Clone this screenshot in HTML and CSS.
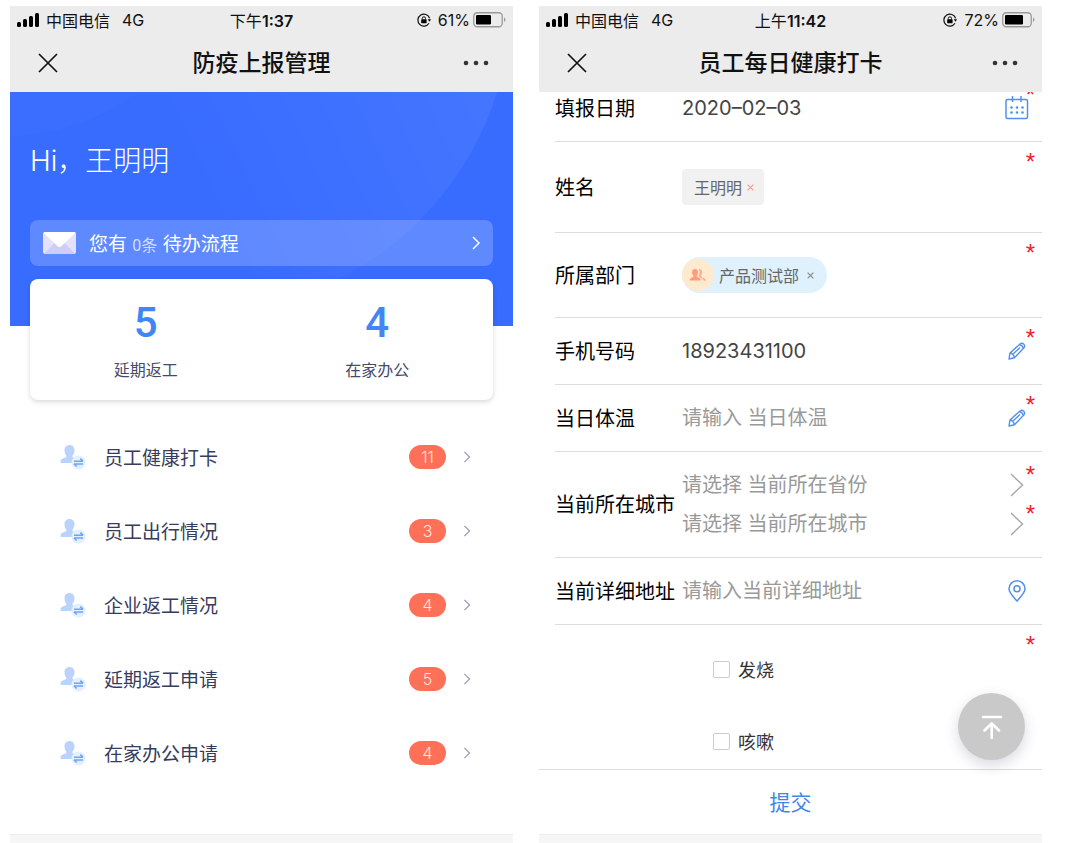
FILE: index.html
```html
<!DOCTYPE html>
<html lang="zh-CN">
<head>
<meta charset="utf-8">
<meta name="viewport" content="width=device-width, initial-scale=1">
<title>防疫上报管理</title>
<link rel="stylesheet" href="styles.css">
</head>
<body>
<svg class="defs" aria-hidden="true">
  <symbol id="signal" viewBox="0 0 23 14"><rect x="0" y="9" width="4" height="5" rx="1.5"/><rect x="6" y="6" width="4" height="8" rx="1.5"/><rect x="12" y="3" width="4" height="11" rx="1.5"/><rect x="18" y="0" width="4" height="14" rx="1.5"/></symbol>
  <symbol id="lock" viewBox="0 0 14 14"><path d="M12.6 5.2A6 6 0 1 0 12 10.3" fill="none" stroke="currentColor" stroke-width="1.2"/><path d="M10.7 6.2h3.3l-1.5 2.5z"/><rect x="4.2" y="6.3" width="5.4" height="4" rx=".7"/><path d="M5.3 6.6V5.4a1.6 1.6 0 0 1 3.2 0v1.2" fill="none" stroke="currentColor"/></symbol>
  <symbol id="close" viewBox="0 0 20 20"><path d="M1 1l18 18M19 1L1 19" fill="none" stroke="currentColor" stroke-width="1.7"/></symbol>
  <symbol id="more" viewBox="0 0 26 6"><circle cx="3" cy="3" r="2.3"/><circle cx="13" cy="3" r="2.3"/><circle cx="23" cy="3" r="2.3"/></symbol>
  <symbol id="chevron" viewBox="0 0 8 14"><path d="M1 1l6 6-6 6" fill="none" stroke="currentColor" stroke-width="1.5"/></symbol>
  <symbol id="wide-chevron" viewBox="0 0 14 24"><path d="M1 1l11.500 11L1 23" fill="none" stroke="currentColor" stroke-width="1.5"/></symbol>
  <symbol id="cross" viewBox="0 0 8 8"><path d="M.7 .7l6.600 6.600M7.300 .7L.7 7.300" fill="none" stroke="currentColor" stroke-width="1.3"/></symbol>
  <symbol id="pencil" viewBox="0 0 18 18"><path d="M1 17l1-6L12.300 1.700q1.700-1.200 3.300 .3t.6 3.500L6.500 15.800zM2 11q3.500 .6 4.500 4.800M11.500 2.500q3 .8 4 3.800M5.300 11.800l6.700-6.300" fill="none" stroke="currentColor" stroke-width="1.4" stroke-linejoin="round"/></symbol>
  <symbol id="person" viewBox="0 0 26 26"><path d="M9.500 1c3 0 5 2.200 5 5.200 0 2.100-.8 4.300-1.900 5.300-.6 1.300.2 2 1.500 2.500 2.400.9 3.400 1.500 3.400 5H.6c-.2-3.500.8-4.100 3.700-5 1.800-.6 2.500-1.200 1.800-2.500C5 10.400 4.500 8.200 4.500 6.200 4.500 3.200 6.500 1 9.500 1z" fill="#bbd3fb"/><circle cx="18.500" cy="18.500" r="7" fill="#e3effe"/><path d="M14 17.200h9M20.300 14.700l2.700 2.500M23 20h-9M16.700 22.500L14 20" stroke="#6fa5f4" stroke-width="1.600" fill="none"/></symbol>
</svg>

<main class="screens">
  <section class="phone">
    <header class="topbar">
      <div class="status">
        <div class="carrier"><svg class="signal"><use href="#signal"/></svg><span>中国电信</span><span class="network">4G</span></div>
        <div class="clock">下午<b>1:37</b></div>
        <div class="power"><svg class="lock"><use href="#lock"/></svg><span>61%</span>
          <svg class="battery" viewBox="0 0 33 16"><rect x=".75" y=".75" width="28.500" height="14" rx="3.500" fill="none" stroke="#999" stroke-width="1.300"/><rect x="3" y="3" width="15" height="9.500" rx="1.200"/><path d="M31 5.500q1.500 .8 1.500 2.300T31 10z" fill="#999"/></svg></div>
      </div>
      <nav class="navbar">
        <button class="nav-button" aria-label="关闭"><svg class="close"><use href="#close"/></svg></button>
        <h1>防疫上报管理</h1>
        <button class="nav-button nav-more" aria-label="更多"><svg class="more"><use href="#more"/></svg></button>
      </nav>
    </header>

    <div class="hero">
      <svg class="hero-glow" aria-hidden="true">
        <defs><linearGradient id="glow" gradientUnits="userSpaceOnUse" x1="200" y1="120" x2="460" y2="0"><stop offset="0" stop-color="#fff" stop-opacity="0"/><stop offset="1" stop-color="#fff" stop-opacity=".06"/></linearGradient></defs>
        <circle cx="190" cy="-92" r="311" fill="url(#glow)"/>
        <circle cx="-10" cy="-192" r="237" fill="#fff" opacity=".02"/>
      </svg>
      <p class="greeting">Hi，王明明</p>
      <a class="notice" href="#todo">
        <svg class="mail" viewBox="0 0 33 22"><rect width="33" height="22" rx="2" fill="#e4e2fb"/><path d="M1 21.500L13 9.500h7l12 12q-.5 .5-1.500 .5h-28q-1 0-1.500-.5z" fill="#cfcdf6"/><path d="M.5 1Q1 0 2 0h29q1 0 1.500 1L18.500 14q-2 1.800-4 0z" fill="#fff"/></svg>
        <span class="notice-text">您有 <span class="todo-count">0条</span> 待办流程</span>
        <svg class="chevron"><use href="#chevron"/></svg>
      </a>
    </div>
    <div class="summary">
      <div class="stat"><strong>5</strong><span>延期返工</span></div>
      <div class="stat"><strong>4</strong><span>在家办公</span></div>
    </div>
    <ul class="menu">
      <li><a href="#checkin"><svg class="person"><use href="#person"/></svg><span class="menu-name">员工健康打卡</span><span class="count">11</span><svg class="chevron"><use href="#chevron"/></svg></a></li>
      <li><a href="#travel"><svg class="person"><use href="#person"/></svg><span class="menu-name">员工出行情况</span><span class="count">3</span><svg class="chevron"><use href="#chevron"/></svg></a></li>
      <li><a href="#return"><svg class="person"><use href="#person"/></svg><span class="menu-name">企业返工情况</span><span class="count">4</span><svg class="chevron"><use href="#chevron"/></svg></a></li>
      <li><a href="#delay"><svg class="person"><use href="#person"/></svg><span class="menu-name">延期返工申请</span><span class="count">5</span><svg class="chevron"><use href="#chevron"/></svg></a></li>
      <li><a href="#home-office"><svg class="person"><use href="#person"/></svg><span class="menu-name">在家办公申请</span><span class="count">4</span><svg class="chevron"><use href="#chevron"/></svg></a></li>
    </ul>
    <div class="home-strip"></div>
  </section>

  <section class="phone">
    <header class="topbar">
      <div class="status">
        <div class="carrier"><svg class="signal"><use href="#signal"/></svg><span>中国电信</span><span class="network">4G</span></div>
        <div class="clock">上午<b>11:42</b></div>
        <div class="power"><svg class="lock"><use href="#lock"/></svg><span>72%</span>
          <svg class="battery" viewBox="0 0 33 16"><rect x=".75" y=".75" width="28.500" height="14" rx="3.500" fill="none" stroke="#999" stroke-width="1.300"/><rect x="3" y="3" width="18" height="9.500" rx="1.200"/><path d="M31 5.500q1.500 .8 1.500 2.300T31 10z" fill="#999"/></svg></div>
      </div>
      <nav class="navbar">
        <button class="nav-button" aria-label="关闭"><svg class="close"><use href="#close"/></svg></button>
        <h1>员工每日健康打卡</h1>
        <button class="nav-button nav-more" aria-label="更多"><svg class="more"><use href="#more"/></svg></button>
      </nav>
    </header>

    <form class="report">
      <div class="fields-area">
        <div class="fields">
          <div class="field">
            <label for="date">填报日期</label>
            <div class="control"><input id="date" type="text" value="2020–02–03"><svg class="calendar" viewBox="0 0 24 24"><rect x="1" y="3.500" width="21.500" height="19" rx="1.500"/><path d="M7.500 0v6M16 0v6"/><g class="dots"><circle cx="6.500" cy="11.500" r="1.300"/><circle cx="12" cy="11.500" r="1.300"/><circle cx="17.500" cy="11.500" r="1.300"/><circle cx="6.500" cy="16.500" r="1.300"/><circle cx="12" cy="16.500" r="1.300"/><circle cx="17.500" cy="16.500" r="1.300"/></g></svg></div>
            <span class="required">*</span>
          </div>
          <div class="field field-name">
            <span class="label">姓名</span>
            <div class="control"><span class="tag">王明明<button type="button" class="remove remove-name" aria-label="移除王明明"><svg><use href="#cross"/></svg></button></span></div>
            <span class="required">*</span>
          </div>
          <div class="field field-dept">
            <span class="label">所属部门</span>
            <div class="control"><span class="tag tag-dept"><span class="avatar"><svg viewBox="0 0 18 14"><path d="M6 1c2 0 3 1.500 3 3.300 0 1.500-.5 2.600-1.200 3.300-.3 1 .2 1.400 1.400 1.800 1.600.5 2.300 1.100 2.300 3.100H.8c0-2 .6-2.600 2.200-3.100 1.200-.4 1.700-.8 1.300-1.800C3.500 6.900 3 5.800 3 4.300 3 2.500 4 1 6 1z"/><path d="M9.500 1c2.300-.5 3.600 1 3.600 3 0 1.500-.4 2.600-1.100 3.300-.3 1 .3 1.500 1 2.200l.8 2.500-3.300-2.700c-.6-.6-1-1-.7-1.800 1.200-2 1.200-4.700-.3-6.500z" opacity=".75"/><path d="M13.500 9l3.800 3.500h-2.500z"/></svg></span>产品测试部<button type="button" class="remove" aria-label="移除产品测试部"><svg><use href="#cross"/></svg></button></span></div>
            <span class="required">*</span>
          </div>
          <div class="field">
            <label for="phone">手机号码</label>
            <div class="control"><input id="phone" type="text" value="18923431100"><svg class="pencil"><use href="#pencil"/></svg></div>
            <span class="required">*</span>
          </div>
          <div class="field">
            <label for="temp">当日体温</label>
            <div class="control"><input id="temp" type="text" placeholder="请输入 当日体温"><svg class="pencil"><use href="#pencil"/></svg></div>
            <span class="required">*</span>
          </div>
          <div class="field field-city">
            <label for="province">当前所在城市</label>
            <div class="choices">
              <div class="control"><select id="province"><option>请选择 当前所在省份</option></select><svg class="wide-chevron"><use href="#wide-chevron"/></svg><span class="required">*</span></div>
              <div class="control"><select id="city" aria-label="当前所在城市"><option>请选择 当前所在城市</option></select><svg class="wide-chevron"><use href="#wide-chevron"/></svg><span class="required">*</span></div>
            </div>
          </div>
          <div class="field">
            <label for="address">当前详细地址</label>
            <div class="control"><input id="address" type="text" placeholder="请输入当前详细地址"><svg class="pin" viewBox="0 0 18 22"><path d="M9 21C6 17.500 1 13 1 8.800A8 8 0 0 1 17 8.800C17 13 12 17.500 9 21z"/><circle cx="9" cy="8.800" r="3"/></svg></div>
          </div>
          <div class="field field-symptoms">
            <label class="symptom"><input type="checkbox">发烧</label>
            <label class="symptom"><input type="checkbox">咳嗽</label>
            <span class="required">*</span>
          </div>
        </div>
        <button type="button" class="to-top" aria-label="回到顶部"><svg viewBox="0 0 22 24"><path d="M2 2h18M10.700 23V8.500M3.500 15.500l7.200-7 7.300 7" fill="none" stroke="#fff" stroke-width="2.600" stroke-linecap="round" stroke-linejoin="round"/></svg></button>
      </div>
      <button type="submit" class="submit">提交</button>
    </form>
    <div class="home-strip"></div>
  </section>
</main>
</body>
</html>
```
FILE: styles.css
```css
* { box-sizing: border-box; }

body {
  margin: 0;
  background: #fff;
  color: #111;
  font-family: Inter, "Noto Sans CJK SC", sans-serif;
  font-size: 16px;
}

h1, p, ul { margin: 0; padding: 0; }
ul { list-style: none; }
a { color: inherit; text-decoration: none; }
svg { display: block; flex: none; }
button, input, select { font: inherit; }
button { padding: 0; border: 0; background: none; color: inherit; cursor: pointer; }

.defs { position: absolute; width: 0; height: 0; }

.screens {
  display: grid;
  grid-template-columns: 1fr 1fr;
  gap: 26px;
  height: 100vh;
  padding: 6px 26px 0 10px;
}

.phone {
  display: flex;
  flex-direction: column;
  min-width: 0;
  min-height: 0;
}

/* status bar and navigation */
.topbar { flex: none; background: #ececec; }

.status {
  display: grid;
  grid-template-columns: 1fr auto 1fr;
  align-items: center;
  height: 28px;
  padding: 0 7px;
}
.carrier, .power { display: flex; align-items: center; }
.carrier { gap: 6px; }
.network { margin-left: 6px; }
.clock b { font-weight: 600; }
.power { justify-content: flex-end; gap: 3px; }
.signal { width: 23px; height: 14px; }
.lock { width: 14px; height: 14px; margin-right: 4px; }
.battery { width: 33px; height: 16px; }

.navbar {
  display: grid;
  grid-template-columns: 1fr auto 1fr;
  align-items: center;
  height: 58px;
  padding: 0 24px;
}
.navbar h1 { font-size: 23px; font-weight: 500; line-height: 32px; }
.nav-button { justify-self: start; margin-left: 4px; }
.nav-more { justify-self: end; color: #333; fill: #333; }
.close { width: 20px; height: 20px; }
.more { width: 26px; height: 6px; }

/* dashboard */
.hero {
  position: relative;
  flex: none;
  height: 234px;
  padding: 48px 20px 0;
  background: #386cff;
  color: #fff;
}
.hero-glow { position: absolute; top: 0; left: 0; width: 100%; height: 100%; }
.greeting { position: relative; font-size: 28px; font-weight: 300; line-height: 42px; }

.notice {
  position: relative;
  display: flex;
  align-items: center;
  height: 46px;
  margin-top: 38px;
  padding: 0 13px;
  border-radius: 8px;
  background: rgba(255, 255, 255, .2);
  font-size: 19px;
}
.notice-text { flex: 1; margin-left: 13px; padding-bottom: 2px; }
.todo-count { font-family: Roboto, "Noto Sans CJK SC", sans-serif; font-size: 16px; opacity: .7; }
.mail { width: 33px; height: 22px; }
.chevron { width: 8px; height: 14px; }

.summary {
  position: relative;
  display: grid;
  grid-template-columns: 1fr 1fr;
  flex: none;
  margin: -47px 20px 0;
  padding: 20px 0 18px;
  border-radius: 8px;
  background: #fff;
  box-shadow: 0 2px 5px rgba(0, 0, 0, .15);
}
.stat { display: flex; flex-direction: column; align-items: center; gap: 12px; }
.stat strong {
  color: #4285f4;
  font-family: Roboto, sans-serif;
  font-size: 42px;
  font-weight: 500;
  line-height: 48px;
}
.stat span { color: #464a6b; line-height: 23px; }

.menu { margin-top: 20px; padding: 0 42px 0 50px; }
.menu a { display: flex; align-items: center; height: 74px; }
.menu-name { flex: 1; margin-left: 18px; padding-bottom: 2px; color: #373c5c; font-size: 19px; }
.person { width: 26px; height: 26px; }
.count {
  width: 37px;
  margin-right: 17px;
  border-radius: 12px;
  background: #ff7058;
  color: #ffe5df;
  font-weight: 300;
  line-height: 24px;
  text-align: center;
}
.menu .chevron { height: 12px; color: #9a9db8; }

.home-strip {
  flex: none;
  height: 9px;
  margin-top: auto;
  border-top: 1px solid #eee;
  background: #f6f6f6;
}

/* daily report form */
.report { display: flex; flex: 1; flex-direction: column; min-height: 0; }
.fields-area { position: relative; flex: 1; min-height: 0; }
.fields { height: 100%; padding-left: 16px; overflow: hidden; }

.field {
  position: relative;
  display: grid;
  grid-template-columns: 127px 1fr;
  align-items: center;
  min-height: 67px;
  border-bottom: 1px solid #ddd;
  color: #000;
  font-size: 20px;
}
.field > label, .label { padding-bottom: 2px; }
.field:first-child { margin-top: -17px; }
.field-name { min-height: 91px; }
.field-dept { min-height: 85px; }
.field-city { min-height: 106px; }

.control {
  display: flex;
  align-items: center;
  min-width: 0;
  padding-right: 13px;
}
.control input, .control select {
  flex: 1;
  min-width: 0;
  height: 39px;
  padding: 0;
  border: 0;
  outline: 0;
  background: none;
  color: #444;
  appearance: none;
}
.control select, .control input::placeholder { color: #999; opacity: 1; }
.choices .control { position: relative; }

.required {
  position: absolute;
  top: 6px;
  right: 7px;
  color: #f0202a;
  font-family: "Liberation Sans", sans-serif;
  font-size: 24px;
  line-height: 28px;
}
.choices .required { top: -5px; }

.calendar, .pin { fill: none; stroke: #5290ee; stroke-width: 1.5; }
.calendar { width: 24px; height: 24px; }
.calendar .dots { fill: #5290ee; stroke: none; }
.pencil { width: 18px; height: 18px; margin-right: 3px; color: #5290ee; }
.pin { width: 18px; height: 22px; margin-right: 3px; }
.wide-chevron { width: 14px; height: 24px; margin-right: 5px; color: #aaa; }

.tag {
  display: flex;
  align-items: center;
  height: 36px;
  padding: 0 10px 0 12px;
  border-radius: 4px;
  background: #f1f1f1;
  color: #666;
  font-size: 16px;
}
.tag-dept { padding: 0 13px 0 0; border-radius: 18px; background: #def1fc; }
.remove { margin-left: 5px; color: #888; }
.remove-name { color: #f59a9a; }
.remove svg { width: 7px; height: 7px; }
.tag-dept .remove { margin-left: 8px; }
.avatar {
  display: grid;
  place-items: center;
  width: 32px;
  height: 32px;
  margin-right: 5px;
  border-radius: 50%;
  background: #ffe9cf;
}
.avatar svg { width: 18px; height: 14px; fill: #ff9c7c; }

.field-symptoms { display: block; padding-top: 8px; }
.field > .symptom {
  display: flex;
  align-items: center;
  gap: 8px;
  height: 72px;
  padding: 0 0 0 158px;
  color: #333;
  font-size: 18px;
}
.symptom input {
  width: 17px;
  height: 17px;
  margin: 0;
  border: 1px solid #ccc;
  border-radius: 2px;
  background: #fff;
  appearance: none;
}
.symptom input:checked { background: #4285f4; }

.to-top {
  position: absolute;
  right: 17px;
  bottom: 9px;
  display: grid;
  place-items: center;
  width: 67px;
  height: 67px;
  border-radius: 50%;
  background: #c9c9c9;
  box-shadow: 0 5px 14px rgba(60, 60, 110, .2);
}
.to-top svg { width: 22px; height: 24px; }

.submit {
  flex: none;
  height: 65px;
  padding-bottom: 3px;
  border-top: 1px solid #ddd;
  color: #4285e8;
  font-size: 21px;
}
```
